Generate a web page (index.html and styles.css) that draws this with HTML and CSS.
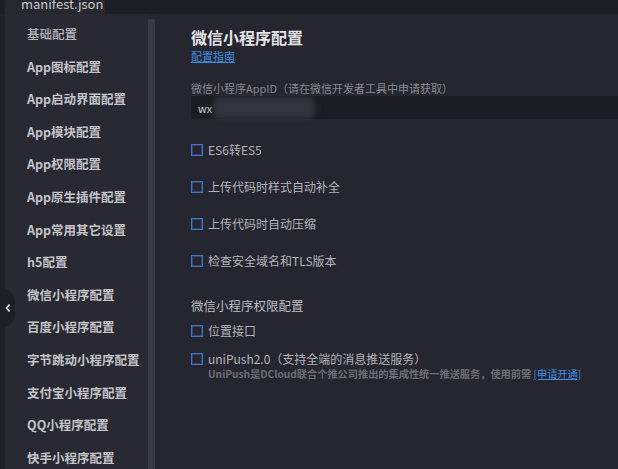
FILE: index.html
```html
<!DOCTYPE html>
<html lang="zh">
<head>
<meta charset="utf-8">
<link rel="stylesheet" href="styles.css">
</head>
<body>
<div class="app">
  <div class="topbar">
    <div class="tab">manifest.json</div>
  </div>
  <div class="body">
    <div class="edge"></div>
    <nav class="sidebar">
      <div class="item first">基础配置</div>
      <div class="item">App图标配置</div>
      <div class="item">App启动界面配置</div>
      <div class="item">App模块配置</div>
      <div class="item">App权限配置</div>
      <div class="item">App原生插件配置</div>
      <div class="item">App常用其它设置</div>
      <div class="item">h5配置</div>
      <div class="item">微信小程序配置</div>
      <div class="item">百度小程序配置</div>
      <div class="item">字节跳动小程序配置</div>
      <div class="item">支付宝小程序配置</div>
      <div class="item">QQ小程序配置</div>
      <div class="item">快手小程序配置</div>
    </nav>
    <div class="scrollbar"><div class="thumb"></div></div>
    <main class="main">
      <h1 class="title">微信小程序配置</h1>
      <a class="link guide">配置指南</a>
      <div class="label">微信小程序AppID（请在微信开发者工具中申请获取）</div>
      <div class="input"><span class="val">wx</span><span class="blur"></span></div>
      <div class="checks">
        <label class="check"><span class="box"></span>ES6转ES5</label>
        <label class="check"><span class="box"></span>上传代码时样式自动补全</label>
        <label class="check"><span class="box"></span>上传代码时自动压缩</label>
        <label class="check"><span class="box"></span>检查安全域名和TLS版本</label>
      </div>
      <div class="section">微信小程序权限配置</div>
      <label class="check tight"><span class="box"></span>位置接口</label>
      <div class="push">
        <label class="check tight"><span class="box"></span>uniPush2.0（支持全端的消息推送服务）</label>
        <div class="desc">UniPush是DCloud联合个推公司推出的集成性统一推送服务，使用前需 <a class="link">[申请开通]</a></div>
      </div>
    </main>
    <div class="collapse"><svg width="8" height="10" viewBox="0 0 8 10"><path d="M5.5 1.5 L2.5 5 L5.5 8.5" fill="none" stroke="#e6e6e6" stroke-width="1.6"/></svg></div>
  </div>
</div>
</body>
</html>
```
FILE: styles.css
```css
* { box-sizing: border-box; }
html, body { margin: 0; padding: 0; }
body {
  width: 618px; height: 469px; overflow: hidden;
  background: #262630;
  font-family: "Noto Sans CJK SC", "Noto Sans", sans-serif;
}
.app { display: flex; flex-direction: column; height: 469px; }
.topbar {
  height: 14px; background: #1e1e26; display: flex; padding-left: 5px; flex: none;
}
.tab {
  width: 100px; height: 14px; background: #272731; color: #c9c9c9;
  font-size: 13px; line-height: 1; padding-left: 16px; overflow: hidden;
  display: flex; align-items: flex-end; padding-bottom: 4px;
}
.body { display: flex; flex: 1; position: relative; min-height: 0; }
.edge { width: 5px; background: #22222b; flex: none; }
.sidebar {
  width: 143px; flex: none; background: #292933; padding-top: 4px;
}
.item {
  height: 32.6px; line-height: 32.6px; padding-left: 22px;
  color: #c3c3c8; font-size: 12.5px; font-weight: 700; white-space: nowrap;
}
.item.first { font-weight: 500; color: #b5b5ba; }
.scrollbar { width: 9px; flex: none; background: #272731; padding-top: 5px; }
.thumb { width: 7px; height: 100%; background: #383944; }
.main { flex: 1; padding: 13px 0 0 34px; min-width: 0; }
.title { margin: 0; font-size: 16px; font-weight: 700; color: #e4e4e8; line-height: 20px; }
.link { color: #3b8fe0; text-decoration: underline; cursor: pointer; }
.guide { display: block; font-size: 11px; line-height: 14px; margin-top: 2px; }
.label { margin-top: 17px; font-size: 11px; color: #8a8a92; line-height: 16px; }
.input {
  margin-top: 0; height: 23px; background: #1c1c24; display: flex; align-items: center;
  padding-left: 7px; position: relative;
}
.val { font-size: 11px; color: #d0d0d0; }
.blur {
  position: absolute; left: 22px; top: 1px; width: 102px; height: 22px;
  background: #35353f; filter: blur(3px); border-radius: 8px;
}
.checks { margin-top: 21px; display: flex; flex-direction: column; gap: 17px; }
.check {
  display: flex; align-items: center; font-size: 12px; color: #b4b4ba; height: 20px; line-height: 20px;
}
.box {
  width: 12px; height: 12px; border: 1px solid #4672c8; box-shadow: inset 0 0 0 1px rgba(61,102,184,0.45);
  margin-right: 5px; flex: none;
}
.section { margin-top: 26px; font-size: 12.5px; color: #bdbdc2; line-height: 18px; margin-bottom: 6px; }
.push { margin-top: 8px; }
.desc { font-size: 10.2px; color: #6e6e76; font-weight: 700; padding-left: 17px; line-height: 14px; margin-top: -2px; white-space: nowrap; }
.desc .link { font-weight: 400; color: #3b8fe0; }
.collapse {
  position: absolute; left: 0; top: 274px; width: 15px; height: 40px;
  background: #1f1f27; border-radius: 0 20px 20px 0;
  display: flex; align-items: center; justify-content: center;
}
```
